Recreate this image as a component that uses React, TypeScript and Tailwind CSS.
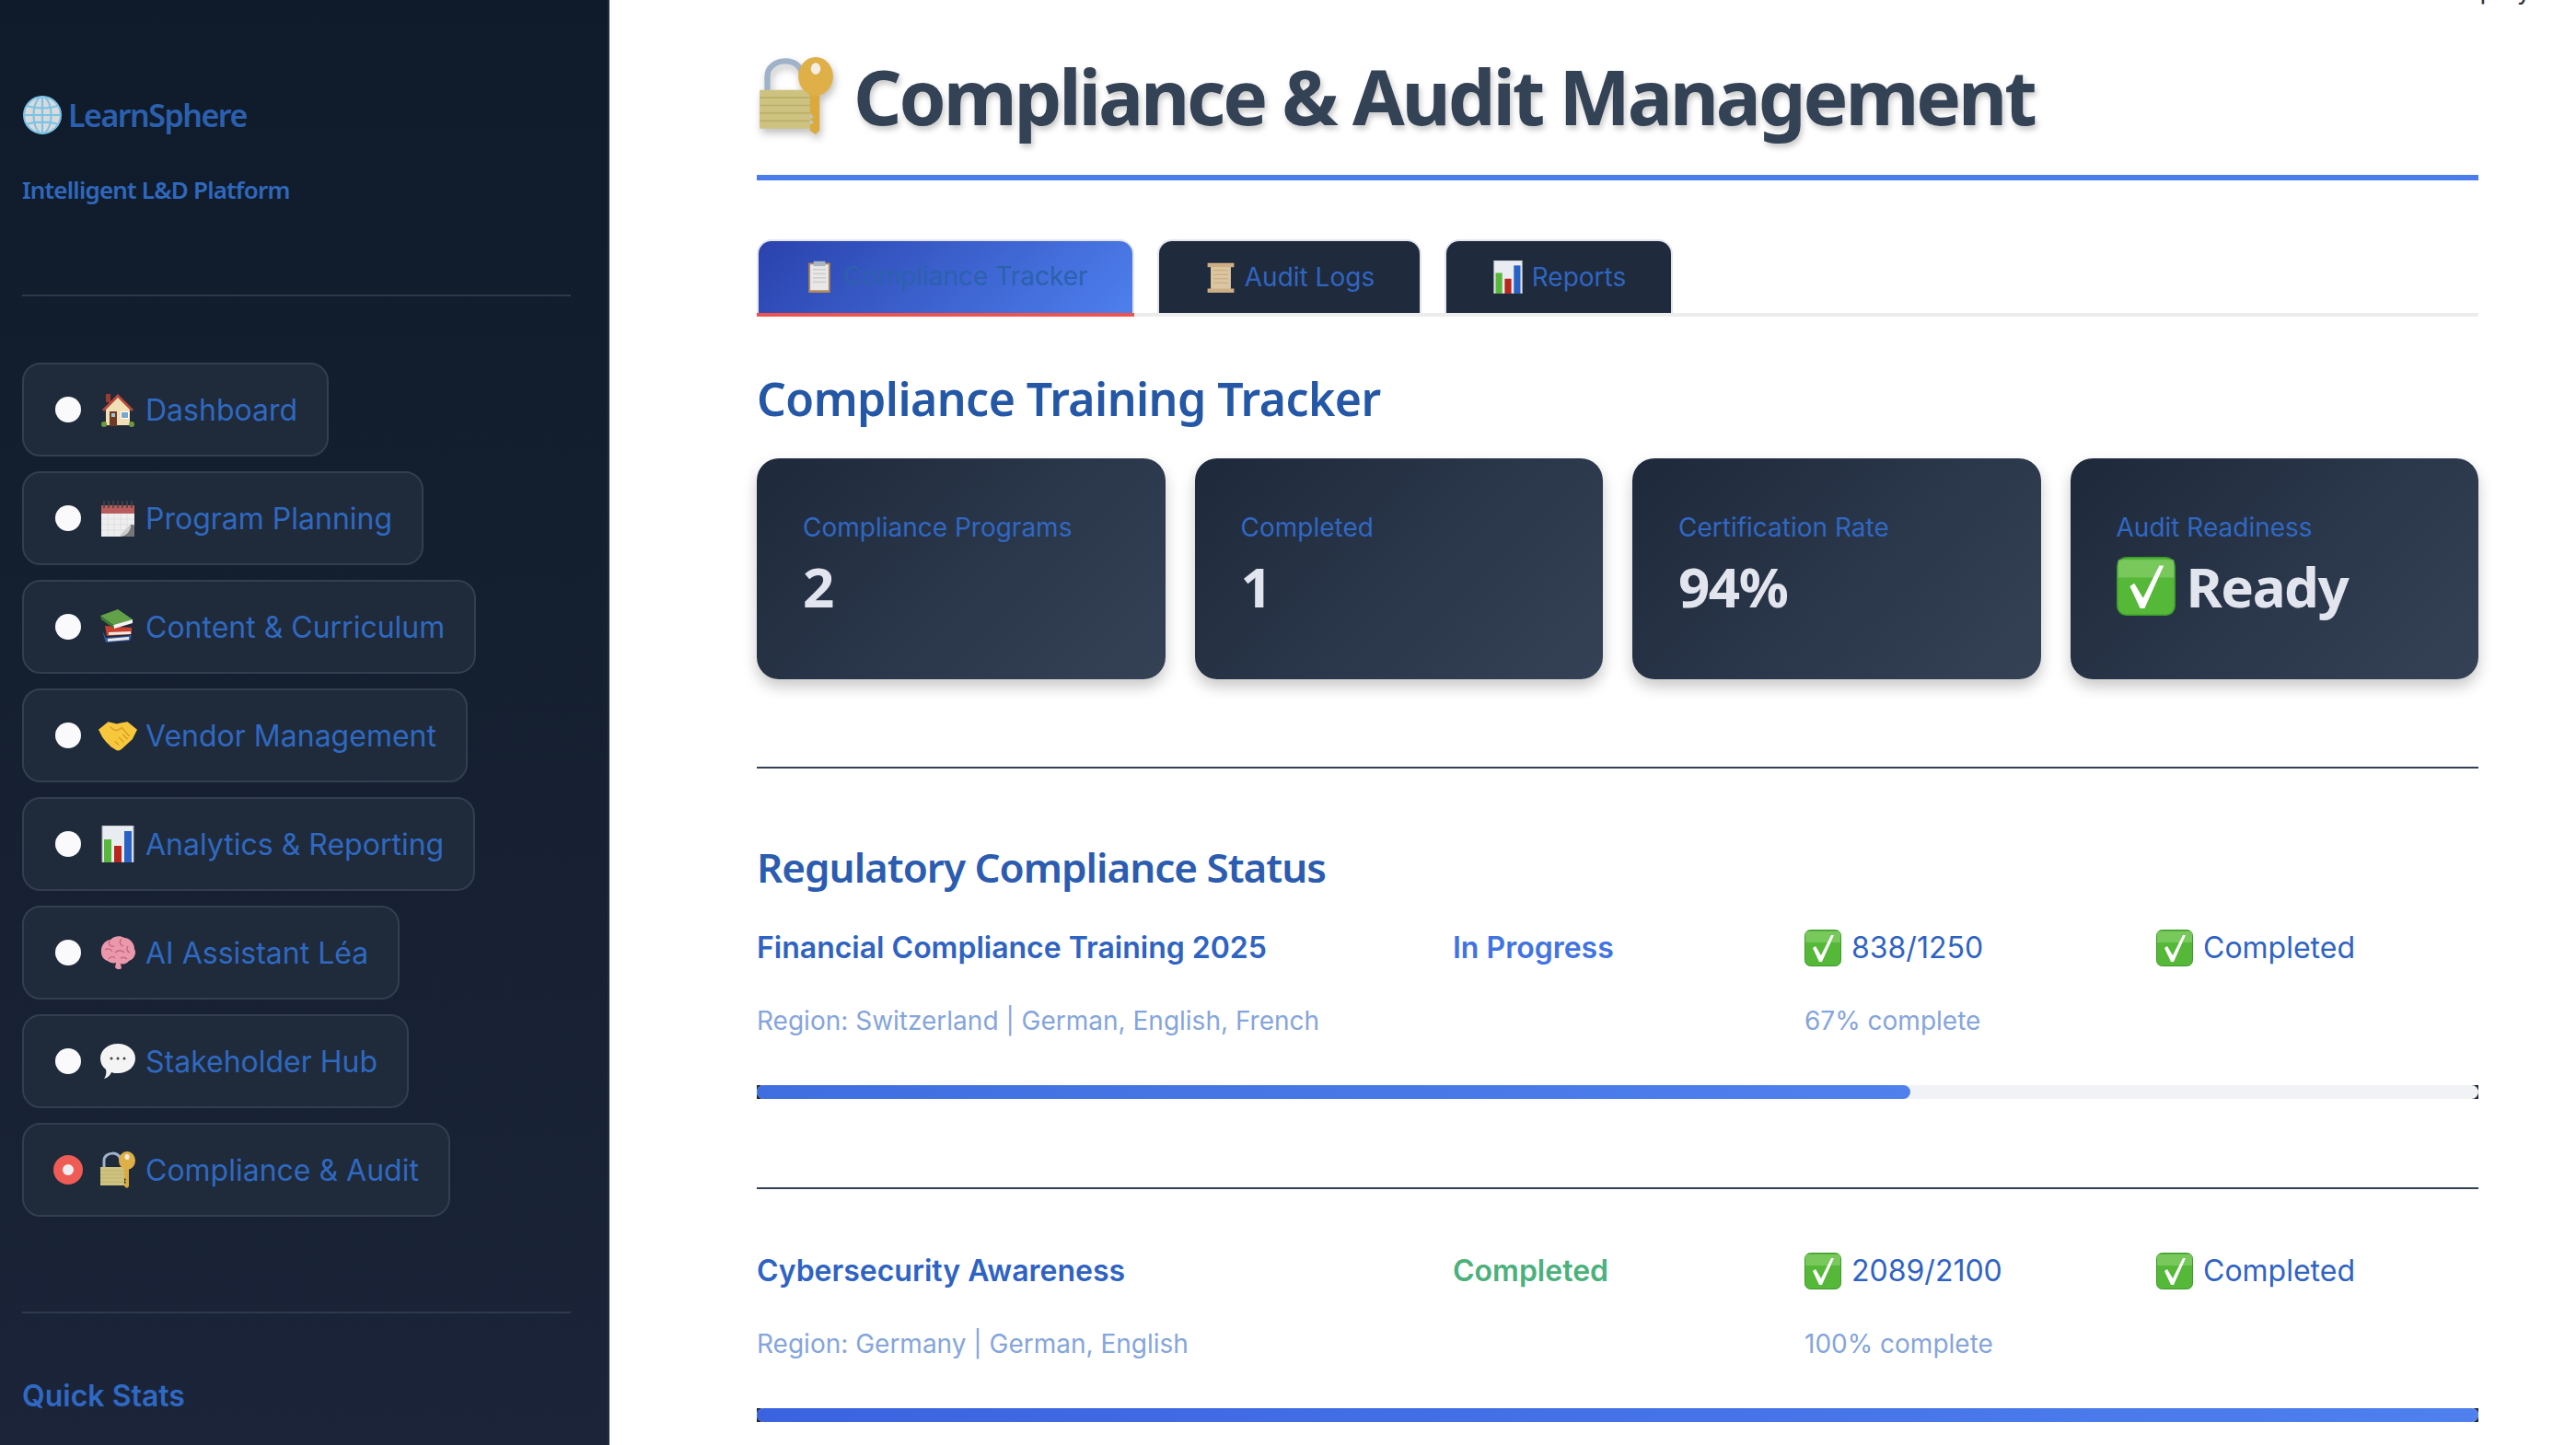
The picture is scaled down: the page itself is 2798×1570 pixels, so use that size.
import type { ReactNode } from 'react';

// Emoji are drawn by hand, the sandbox has no colour emoji font
function Emoji({ children, className }: { children: ReactNode; className: string }) {
  return (
    <svg viewBox="0 0 40 40" className={`shrink-0 ${className}`}>
      {children}
    </svg>
  );
}

const Globe = () => (
  <Emoji className="w-[42px] h-[42px]">
    <circle cx="20" cy="20" r="19" fill="#d9dadb" stroke="#7cc3e6" strokeWidth="2" />
    <g fill="none" stroke="#7cc3e6" strokeWidth="2">
      <ellipse cx="20" cy="20" rx="9" ry="19" />
      <path d="M20 1v38M1 20h38M4 10.5c9 3 23 3 32 0M4 29.5c9-3 23-3 32 0" />
    </g>
  </Emoji>
);

const House = () => (
  <Emoji className="w-[40px] h-[40px]">
    <path d="M7 3h5v9H7z" fill="#9c3b2e" />
    <path d="M7 18 20 5l13 13v19H7z" fill="#f1dfb6" />
    <path d="M3 20 20 3l17 17-2 2L20 7 5 22z" fill="#b5483a" />
    <path d="M11 22h8v16h-8z" fill="#6e3a28" />
    <path d="M13 24h4v4h-4z" fill="#9fc5dc" />
    <path d="M23 22h9v8h-9z" fill="#fff" />
    <path d="M24 23h7v6h-7z" fill="#76a7cc" />
    <circle cx="5" cy="36" r="3" fill="#6d9a3f" />
    <circle cx="35" cy="36" r="3" fill="#6d9a3f" />
  </Emoji>
);

const Calendar = () => (
  <Emoji className="w-[40px] h-[40px]">
    <path d="M2 6h36v34H2z" fill="#eeeeee" />
    <path d="M2 6h36v9H2z" fill="#b85c5c" />
    <path d="M5 1v8M10 1v8M15 1v8M20 1v8M25 1v8M30 1v8M35 1v8" stroke="#444" strokeWidth="1.6" />
    <path d="M2 21h36M2 27h36M2 33h36M9 15v25M16 15v25M23 15v25M30 15v25" stroke="#dcdcdc" strokeWidth="0.8" />
    <path d="M22 40c7-1 11-5 12-13 2 0 4 0 4 1v12z" fill="#777" />
    <path d="M22 40c3-6 7-8 12-13 0 8-5 12-12 13z" fill="#ccc" />
  </Emoji>
);

const Books = () => (
  <Emoji className="w-[40px] h-[40px]">
    <path d="M3 24l4 13 26-2 2-6-4 1-24 2z" fill="#3a5fa8" />
    <path d="M9 33l23-2v3L9 36z" fill="#e8e8e8" />
    <path d="M6 19l2 11 27-2v-7z" fill="#c9402e" />
    <path d="M10 26l24-1v3l-24 1z" fill="#f0ece4" />
    <path d="M1 8 20 1l16 11-21 6z" fill="#62a148" />
    <path d="M15 18l21-6v4l-20 6z" fill="#f4f4f0" />
    <path d="M1 8l14 10 1 4L2 12z" fill="#3f7a32" />
  </Emoji>
);

const Handshake = () => (
  <Emoji className="w-[42px] h-[42px]">
    <path
      d="M0 14 10 6l9 2 5-1 6-1 10 8-5 10-11 10c-2 2-5 2-6 1l-5-3-5-5-4-5z"
      fill="#f8c83c"
    />
    <path d="M12 11c3 3 5 5 9 3l3-2 8 9M17 26l4 4M21 22l5 5M25 19l5 5" fill="none" stroke="#d79c24" strokeWidth="1.3" />
  </Emoji>
);

const Chart = ({ className }: { className: string }) => (
  <Emoji className={className}>
    <path d="M3 0h34v40H3z" fill="#e9edf2" stroke="#a9adb2" strokeWidth="1" />
    <path d="M5 15h8v25H5z" fill="#58b83c" />
    <path d="M16 22h8v18h-8z" fill="#b9261c" />
    <path d="M27 6h8v34h-8z" fill="#2862c4" />
  </Emoji>
);

const Brain = () => (
  <Emoji className="w-[40px] h-[40px]">
    <path
      d="M2 20C1 12 7 6 12 6c3-4 11-5 15-2 6 0 11 6 11 12 3 5-1 12-6 13-2 3-6 4-9 3l1 5c-2 2-6 1-7-1l1-5c-3 1-7 0-9-2-4-1-7-5-7-9z"
      fill="#eb98ad"
    />
    <path
      d="M11 7c-2 4 1 7 5 6M24 5c-3 3-2 7 2 8M6 17c3-2 7-1 8 2M17 20c3-3 8-3 10 0M31 13c-2 3-1 6 2 7M10 27c2-3 5-3 7-1M23 26c2-1 5-1 7 1"
      fill="none"
      stroke="#c66a83"
      strokeWidth="1.5"
    />
  </Emoji>
);

const Bubble = () => (
  <Emoji className="w-[40px] h-[44px]">
    <path d="M20 1c11 0 19 7 19 16s-8 16-19 16c-3 0-5 0-7-1-1 3-4 6-8 7 2-3 3-6 2-10C3 26 1 22 1 17 1 8 9 1 20 1z" fill="#f4f4f4" />
    <circle cx="13" cy="17" r="1.5" fill="#444" />
    <circle cx="20" cy="17" r="1.5" fill="#444" />
    <circle cx="27" cy="17" r="1.5" fill="#444" />
  </Emoji>
);

const LockKey = ({ className }: { className: string }) => (
  <Emoji className={className}>
    <path d="M5 20V10c0-10 18-11 18 0" fill="none" stroke="#9fb2c8" strokeWidth="3" />
    <path d="M1 17h26v20H1z" fill="#cdc27f" />
    <path d="M1 21h26M1 25h26M1 29h26M1 33h26" stroke="#bcae6a" strokeWidth="0.8" />
    <path d="M27 12h5v26l-2 2-3-2v-3l2-1-2-2 2-1-2-2z" fill="#dba93c" />
    <ellipse cx="30" cy="10" rx="9" ry="10" fill="#dfaf48" />
    <ellipse cx="30" cy="6" rx="2.5" ry="3" fill="#f4eee0" />
  </Emoji>
);

const Clipboard = () => (
  <Emoji className="w-[36px] h-[36px]">
    <path d="M7 4h26v36H7z" fill="#b48a5a" />
    <path d="M9 6h22v31H9z" fill="#e8e8e8" />
    <path d="M13 2h14v6H13z" fill="#a9b4c4" />
    <path d="M12 12h16M12 17h16M12 22h16M12 27h16" stroke="#cfcfcf" strokeWidth="2" />
  </Emoji>
);

const Scroll = () => (
  <Emoji className="w-[36px] h-[36px]">
    <path d="M4 3h32v5H32v26h4v5H4v-5h4V8H4z" fill="#cdaf85" />
    <path d="M8 8h24v26H8z" fill="#dcc6a2" />
    <path d="M11 12h18M11 17h18M11 22h18M11 27h18" stroke="#c2a87f" strokeWidth="1.2" />
  </Emoji>
);

const Check = ({ className }: { className: string }) => (
  <Emoji className={className}>
    <rect x="0.5" y="0.5" width="39" height="39" rx="6" fill="#55b838" stroke="#3e9a2b" />
    <path d="M1 2h38v12H1z" fill="#8fd274" opacity="0.6" />
    <path d="M9 20l3-2 6 10L29 6h3L19 35h-3z" fill="#fff" />
  </Emoji>
);

const NAV = [
  { label: 'Dashboard', icon: <House /> },
  { label: 'Program Planning', icon: <Calendar /> },
  { label: 'Content & Curriculum', icon: <Books /> },
  { label: 'Vendor Management', icon: <Handshake /> },
  { label: 'Analytics & Reporting', icon: <Chart className="w-[40px] h-[40px]" /> },
  { label: 'AI Assistant Léa', icon: <Brain /> },
  { label: 'Stakeholder Hub', icon: <Bubble /> },
  { label: 'Compliance & Audit', icon: <LockKey className="w-[40px] h-[44px]" />, active: true },
];

const CARDS: { label: string; value: string; check?: boolean }[] = [
  { label: 'Compliance Programs', value: '2' },
  { label: 'Completed', value: '1' },
  { label: 'Certification Rate', value: '94%' },
  { label: 'Audit Readiness', value: 'Ready', check: true },
];

const TRAININGS = [
  {
    name: 'Financial Compliance Training 2025',
    status: 'In Progress',
    statusClass: 'text-[#4173e2]',
    count: '838/1250',
    region: 'Region: Switzerland | German, English, French',
    pct: 67,
    fill: 'bg-gradient-to-r from-[#3f6ee0] to-[#4f80ee]',
  },
  {
    name: 'Cybersecurity Awareness',
    status: 'Completed',
    statusClass: 'text-[#4cb07c]',
    count: '2089/2100',
    region: 'Region: Germany | German, English',
    pct: 100,
    fill: 'bg-gradient-to-r from-[#3b63e0] to-[#4f80ee]',
  },
];

const heading = "font-['Noto_Sans',sans-serif]";

export default function App() {
  return (
    <div className="relative h-[1570px] overflow-hidden flex bg-white font-['Inter',sans-serif]">
      {/* Sidebar */}
      <aside className="w-[662px] shrink-0 h-full px-[24px] pt-[104px] border-r-2 border-[#232f40] bg-gradient-to-b from-[#0f1b2a] to-[#1b2438]">
        <div className={`flex items-center gap-[7px] h-[42px] ml-[1px] text-[34px] font-semibold text-[#2b60ae] tracking-[-1.5px] ${heading}`}>
          <Globe />
          <span>LearnSphere</span>
        </div>
        <p className={`mt-[42px] text-[26px] leading-[36px] font-semibold text-[#2f68bd] tracking-[-0.8px] ${heading}`}>
          Intelligent L&amp;D Platform
        </p>
        <hr className="mt-[96px] border-t-2 border-[#2d3a4d] w-[596px]" />

        <nav className="mt-[72px] flex flex-col items-start gap-[16px]">
          {NAV.map((item) => (
            <div
              key={item.label}
              className="flex items-center py-[29px] pl-[32px] pr-[32px] rounded-[20px] border-2 border-[#333f50] bg-[#1f2a3b] text-[32px] leading-[40px] text-[#2f69c0]"
            >
              <span className="w-[32px] h-[32px] flex items-center justify-center">
                {item.active ? (
                  <span className="w-[32px] h-[32px] rounded-full bg-[#ef5b55] flex items-center justify-center">
                    <span className="w-[12px] h-[12px] rounded-full bg-[#eceef2]" />
                  </span>
                ) : (
                  <span className="w-[28px] h-[28px] rounded-full bg-[#fafafc]" />
                )}
              </span>
              <span className="ml-[16px] mr-[8px] w-[44px] h-[40px] flex items-center justify-center">{item.icon}</span>
              <span className="whitespace-nowrap translate-y-[1px]">{item.label}</span>
            </div>
          ))}
        </nav>

        <hr className="mt-[103px] border-t-2 border-[#2d3a4d] w-[596px]" />
        <p className="mt-[70px] text-[32px] leading-[40px] font-semibold text-[#2f69c4]">Quick Stats</p>
      </aside>

      {/* Main content */}
      <main className="flex-1 min-w-0 pl-[160px] pr-[106px]">
        <div className="flex items-center gap-[19px] h-[82px] mt-[63px]">
          <LockKey className="w-[86px] h-[84px] drop-shadow-[2px_5px_4px_rgba(0,0,0,0.25)]" />
          <h1 className={`text-[82px] leading-[82px] font-bold text-[#344256] whitespace-nowrap tracking-[-3.12px] [text-shadow:2px_4px_6px_rgba(0,0,0,0.22)] ${heading}`}>
            Compliance &amp; Audit Management
          </h1>
        </div>
        <div className="mt-[45px] h-[6px] bg-[#4b7cec]" />

        {/* Tabs */}
        <div className="mt-[64px] flex gap-[25px] border-b-4 border-[#ececec] h-[84px]">
          <div className="relative w-[410px] h-[84px] flex items-center justify-center gap-[8px] rounded-t-[16px] border-2 border-b-0 border-[#e2e5ee] bg-[linear-gradient(135deg,#2a42ad,#4e80ee)] text-[28px] text-[#2a62ad] pb-[7px]">
            <Clipboard />
            <span>Compliance Tracker</span>
            <span className="absolute -left-[2px] -right-[2px] bottom-0 h-[4px] bg-[#ef5350]" />
          </div>
          <div className="w-[287px] h-[80px] flex items-center justify-center gap-[8px] rounded-t-[16px] border-2 border-b-0 border-[#e2e5ee] bg-[#1f2a3d] text-[28px] text-[#2f66c0] pb-[1px]">
            <Scroll />
            <span>Audit Logs</span>
          </div>
          <div className="w-[248px] h-[80px] flex items-center justify-center gap-[8px] rounded-t-[16px] border-2 border-b-0 border-[#e2e5ee] bg-[#1f2a3d] text-[28px] text-[#2f66c0] pb-[1px]">
            <Chart className="w-[36px] h-[36px]" />
            <span>Reports</span>
          </div>
        </div>

        <h2 className={`mt-[56px] text-[50px] leading-[66px] font-semibold text-[#2557a7] tracking-[-0.55px] ${heading}`}>
          Compliance Training Tracker
        </h2>

        {/* Metric cards */}
        <div className="mt-[32px] grid grid-cols-4 gap-[32px]">
          {CARDS.map((card) => (
            <div
              key={card.label}
              className="h-[240px] rounded-[24px] pl-[50px] pt-[57px] bg-[linear-gradient(135deg,#1e293b,#354256)] shadow-[0_8px_16px_rgba(0,0,0,0.22)]"
            >
              <p className="text-[28px] leading-[36px] text-[#3068c4]">{card.label}</p>
              <div className={`mt-[12px] flex items-center gap-[12px] h-[68px] text-[60px] font-bold text-[#e2e5ee] tracking-[-1.5px] ${heading}`}>
                {card.check && <Check className="w-[64px] h-[64px]" />}
                <span>{card.value}</span>
              </div>
            </div>
          ))}
        </div>

        <hr className="mt-[95px] border-t-2 border-[#334155]" />

        <h3 className={`mt-[79px] text-[44px] leading-[56px] font-semibold text-[#2b5cb0] tracking-[-1px] ${heading}`}>
          Regulatory Compliance Status
        </h3>

        {/* Training rows */}
        <div className="mt-[38px]">
          {TRAININGS.map((t, i) => (
            <div key={t.name}>
              {i > 0 && <hr className="mt-[96px] mb-[67px] border-t-2 border-[#334155]" />}
              <div className="grid grid-cols-[724px_350px_350px_350px] gap-x-[32px]">
                <p className="text-[32px] leading-[44px] font-semibold text-[#2f63c2]">{t.name}</p>
                <p className={`text-[32px] leading-[44px] font-semibold ${t.statusClass}`}>{t.status}</p>
                <div className="flex items-center gap-[11px] text-[32px] leading-[44px] text-[#2f63c2]">
                  <Check className="w-[40px] h-[40px]" />
                  <span>{t.count}</span>
                </div>
                <div className="flex items-center gap-[11px] text-[32px] leading-[44px] text-[#2f63c2]">
                  <Check className="w-[40px] h-[40px]" />
                  <span>Completed</span>
                </div>
                <p className="col-span-2 mt-[35px] text-[28px] leading-[44px] text-[#85a5dc]">{t.region}</p>
                <p className="mt-[35px] text-[28px] leading-[44px] text-[#85a5dc]">{t.pct}% complete</p>
              </div>
              <div className="mt-[48px] h-[15px] bg-[#1e293b]">
                <div className="h-full rounded-full bg-[#f0f2f6]">
                  <div className={`h-full rounded-full ${t.fill}`} style={{ width: `${t.pct}%` }} />
                </div>
              </div>
            </div>
          ))}
        </div>
      </main>

      {/* Toolbar text cut off by the top of the window */}
      <span className="absolute -top-[25px] left-[2657px] text-[28px] leading-[28px] text-[#31333f]">Deploy</span>
    </div>
  );
}
